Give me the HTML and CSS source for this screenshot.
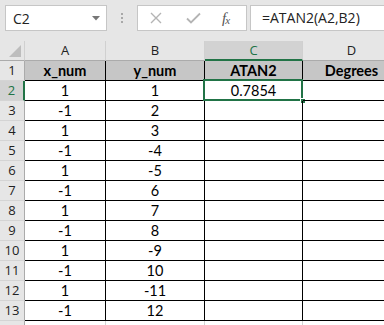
FILE: index.html
```html
<!DOCTYPE html>
<html>
<head>
<meta charset="utf-8">
<link rel="stylesheet" href="styles.css">
</head>
<body>
<div class="app">
  <div class="toolbar">
    <div class="namebox">
      <span class="name">C2</span>
      <svg class="caret" width="8" height="5" viewBox="0 0 8 5"><path d="M0 0H8L4 4.5Z" fill="#777"/></svg>
    </div>
    <div class="grip"><i></i><i></i><i></i></div>
    <div class="fxbox">
      <svg class="ic-x" width="12" height="12" viewBox="0 0 12 12"><path d="M1 1L11 11M11 1L1 11" stroke="#b4b4b4" stroke-width="1.4"/></svg>
      <svg class="ic-check" width="15" height="12" viewBox="0 0 15 12"><path d="M1 6.5L5 10.5L14 1.5" stroke="#b4b4b4" stroke-width="1.8" fill="none"/></svg>
      <span class="fx"><span class="f">f</span><sub>x</sub></span>
    </div>
    <div class="formula">=ATAN2(A2,B2)</div>
  </div>
  <div class="sheet">
    <div class="corner"><svg width="12" height="12" viewBox="0 0 12 12"><path d="M12 0V12H0Z" fill="#bdbdbd"/></svg></div>
    <div class="ch">A</div><div class="ch">B</div><div class="ch sel">C</div><div class="ch">D</div>

    <div class="rh">1</div><div class="c hd">x_num</div><div class="c hd">y_num</div><div class="c hd">ATAN2</div><div class="c hd">Degrees</div>
    <div class="rh sel">2</div><div class="c">1</div><div class="c">1</div><div class="c active">0.7854<span class="frame"></span><span class="handle"></span></div><div class="c"></div>
    <div class="rh">3</div><div class="c">-1</div><div class="c">2</div><div class="c"></div><div class="c"></div>
    <div class="rh">4</div><div class="c">1</div><div class="c">3</div><div class="c"></div><div class="c"></div>
    <div class="rh">5</div><div class="c">-1</div><div class="c">-4</div><div class="c"></div><div class="c"></div>
    <div class="rh">6</div><div class="c">1</div><div class="c">-5</div><div class="c"></div><div class="c"></div>
    <div class="rh">7</div><div class="c">-1</div><div class="c">6</div><div class="c"></div><div class="c"></div>
    <div class="rh">8</div><div class="c">1</div><div class="c">7</div><div class="c"></div><div class="c"></div>
    <div class="rh">9</div><div class="c">-1</div><div class="c">8</div><div class="c"></div><div class="c"></div>
    <div class="rh">10</div><div class="c">1</div><div class="c">-9</div><div class="c"></div><div class="c"></div>
    <div class="rh">11</div><div class="c">-1</div><div class="c">10</div><div class="c"></div><div class="c"></div>
    <div class="rh">12</div><div class="c">1</div><div class="c">-11</div><div class="c"></div><div class="c"></div>
    <div class="rh">13</div><div class="c">-1</div><div class="c">12</div><div class="c"></div><div class="c"></div>
    <div class="rh"></div><div class="e"></div><div class="e"></div><div class="e"></div><div class="e"></div>
  </div>
</div>
</body>
</html>
```

FILE: styles.css
```css
* { box-sizing: border-box; }
html, body { margin: 0; padding: 0; }
body { width: 384px; height: 325px; overflow: hidden; background: #fff; }
.app { width: 384px; }

.toolbar {
  height: 41px;
  background: #e6e6e6;
  display: flex;
  align-items: flex-start;
  padding: 5px 0 0 5px;
  font-family: "Open Sans", "Noto Sans", sans-serif;
}
.namebox {
  width: 102px; height: 26px;
  background: #fff;
  border: 1px solid #c6c6c6;
  display: flex; align-items: center; justify-content: space-between;
  padding: 0 6px 0 7px;
}
.name { font-size: 14px; color: #222; }
.caret { margin-top: 1px; }
.grip {
  width: 30px; height: 26px;
  display: flex; flex-direction: column; align-items: center; justify-content: center; gap: 2px;
}
.grip i { display: block; width: 2px; height: 2px; background: #a8a8a8; }
.fxbox {
  width: 110px; height: 26px;
  background: #fff;
  border: 1px solid #c6c6c6;
  display: flex; align-items: center;
  padding-left: 12px;
}
.ic-x { margin-right: 24px; }
.ic-check { margin-right: 21px; }
.fx {
  font-family: "Liberation Serif", serif; font-style: italic; font-size: 15px; color: #555;
}
.fx .f { letter-spacing: -1px; }
.fx sub { font-size: 11px; vertical-align: -1px; }
.formula {
  margin-left: 3px;
  flex: 1; height: 26px;
  background: #fff;
  border: 1px solid #c6c6c6; border-right: none;
  padding-left: 11px;
  font-size: 14px; line-height: 24px; color: #222;
}

.sheet {
  display: grid;
  grid-template-columns: 25px 81px 99px 98px 98px;
  grid-auto-rows: 20px;
  font-family: "Lato", "Liberation Sans", sans-serif;
  font-size: 14.5px;
  color: #000;
}
.corner {
  background: #e6e6e6;
  border-right: 1px solid #d0d0d0;
  border-bottom: 1px solid #ababab;
  display: flex; align-items: flex-end; justify-content: flex-end;
  padding: 0 3px 3px 0;
}
.ch {
  background: #e6e6e6;
  border-right: 1px solid #d0d0d0;
  border-bottom: 1px solid #ababab;
  text-align: center;
  font-family: "Open Sans", "Noto Sans", sans-serif;
  font-size: 13px; line-height: 19px; color: #222;
}
.ch.sel { background: #d2d2d2; color: #217346; border-bottom: 2px solid #217346; }
.rh {
  background: #e6e6e6;
  border-right: 1px solid #ababab;
  border-bottom: 1px solid #d4d4d4;
  text-align: center;
  font-family: "Open Sans", "Noto Sans", sans-serif;
  font-size: 13px; line-height: 19px; color: #222;
}
.rh.sel { background: #d2d2d2; color: #217346; border-right: 2px solid #217346; }
.c {
  border-right: 1px solid #000;
  border-bottom: 1px solid #000;
  text-align: center;
  line-height: 19px;
  position: relative;
}
.c.hd { background: #c6c6c6; font-weight: bold; }
.frame {
  position: absolute; left: -2px; top: -2px; right: -1px; bottom: -1px;
  border: 2px solid #217346;
}
.handle {
  position: absolute; right: -4px; bottom: -4px;
  width: 6px; height: 6px;
  background: #217346; border: 1px solid #fff;
}
.e { border-right: 1px solid #d4d4d4; }
```
